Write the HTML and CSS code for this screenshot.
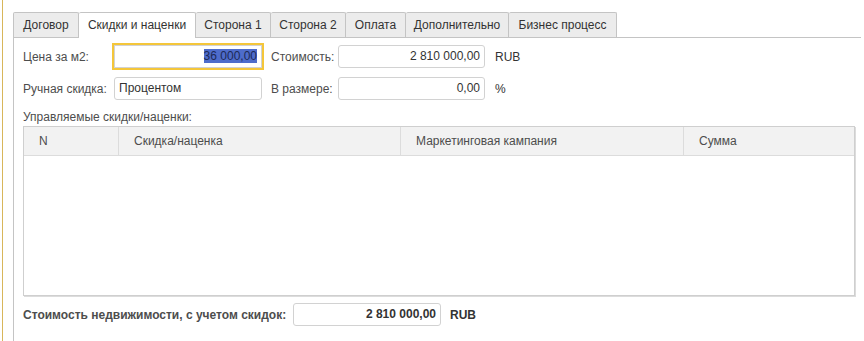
FILE: index.html
```html
<!DOCTYPE html>
<html lang="ru">
<head>
    <meta charset="UTF-8">
    <meta name="viewport" content="width=device-width, initial-scale=1.0">
    <title>Скидки и наценки</title>
    <link rel="stylesheet" href="styles.css">
</head>
<body>
    <div class="page">
        <div class="edge"></div>
        <div class="form">
            <div class="tabs">
                <div class="tab first tab-contract">Договор</div>
                <div class="tab active tab-discounts">Скидки и наценки</div>
                <div class="tab tab-side">Сторона 1</div>
                <div class="tab tab-side">Сторона 2</div>
                <div class="tab tab-pay">Оплата</div>
                <div class="tab tab-extra">Дополнительно</div>
                <div class="tab tab-process">Бизнес процесс</div>
            </div>
            <div class="panel">
                <div class="row">
                    <div class="label">Цена за м2:</div>
                    <div class="field num focus"><span class="selected">36 000,00</span></div>
                    <div class="label label-right">Стоимость:</div>
                    <div class="field field-right num">2 810 000,00</div>
                    <div class="unit">RUB</div>
                </div>
                <div class="row">
                    <div class="label">Ручная скидка:</div>
                    <div class="field">Процентом</div>
                    <div class="label label-right">В размере:</div>
                    <div class="field field-right num">0,00</div>
                    <div class="unit">%</div>
                </div>
                <div class="caption">Управляемые скидки/наценки:</div>
                <div class="table">
                    <div class="table-head">
                        <div class="col">N</div>
                        <div class="col">Скидка/наценка</div>
                        <div class="col">Маркетинговая кампания</div>
                        <div class="col last">Сумма</div>
                    </div>
                    <div class="table-body"></div>
                </div>
                <div class="row total">
                    <div class="label total-label">Стоимость недвижимости, с учетом скидок:</div>
                    <div class="field num">2 810 000,00</div>
                    <div class="unit">RUB</div>
                </div>
            </div>
        </div>
    </div>
</body>
</html>
```

FILE: styles.css
```css
*{
    box-sizing: border-box;
    margin: 0;
    padding: 0;
}
body{
    font-family: "Liberation Sans", Arial, sans-serif;
    font-size: 12px;
    color: #4d4d4d;
    background-color: #fff;
}
.page{
    display: flex;
    height: 341px;
    padding-left: 2px;
}
.edge{
    width: 1px;
    background-color: #d8b65a;
}
.form{
    flex: 1;
    margin-left: 10px;
    margin-right: 3px;
    display: flex;
    flex-direction: column;
}

/* tabs */
.tabs{
    display: flex;
    margin-top: 12px;
    height: 26px;
    border-bottom: 1px solid #c4c4c4;
}
.tab{
    height: 25px;
    line-height: 24px;
    text-align: center;
    background-color: #ececec;
    border-top: 1px solid #c4c4c4;
    border-right: 1px solid #c4c4c4;
    border-radius: 2px 2px 0 0;
    color: #333;
    white-space: nowrap;
}
.tab.first{
    border-left: 1px solid #c4c4c4;
}
.tab.active{
    background-color: #fff;
    height: 26px;
}
.tab-contract{ width: 66px; }
.tab-discounts{ width: 117px; }
.tab-side{ width: 75px; }
.tab-pay{ width: 60px; }
.tab-extra{ width: 103px; }
.tab-process{ width: 108px; }

/* panel */
.panel{
    flex: 1;
    border-left: 1px solid #c4c4c4;
    padding: 7px 0 0 9px;
}
.row{
    display: flex;
    align-items: center;
    height: 23px;
    margin-bottom: 9px;
}
.label{
    flex-shrink: 0;
    width: 91px;
    white-space: nowrap;
}
.label-right{
    width: 67px;
    margin-left: 9px;
}
.field{
    flex-shrink: 0;
    width: 148px;
    height: 23px;
    line-height: 21px;
    padding: 0 4px;
    border: 1px solid #d2d2d2;
    border-radius: 3px;
    color: #333;
    white-space: nowrap;
}
.field-right{
    width: 147px;
}
.num{
    text-align: right;
}
.focus{
    outline: 2px solid #f4c63a;
    border-radius: 0;
}
.selected{
    background-color: #4e6ccb;
    color: #1d2a57;
}
.unit{
    margin-left: 10px;
    color: #333;
}
.caption{
    height: 16px;
    line-height: 16px;
}

/* table */
.table{
    margin-top: 1px;
    width: 832px;
    height: 170px;
    border: 1px solid #cfcfcf;
    box-shadow: 1px 1px 0 #dcdcdc;
    display: flex;
    flex-direction: column;
}
.table-head{
    display: grid;
    grid-template-columns: 95px 282px 283px 1fr;
    height: 29px;
    background-color: #f2f2f2;
    border-bottom: 1px solid #dcdcdc;
}
.col{
    padding-left: 15px;
    line-height: 28px;
    border-right: 1px solid #dcdcdc;
}
.col.last{
    border-right: none;
}
.table-body{
    flex: 1;
}

/* total */
.total{
    margin-top: 7px;
    font-weight: bold;
}
.total-label{
    width: 270px;
}
.total .unit{
    margin-left: 9px;
}
```
